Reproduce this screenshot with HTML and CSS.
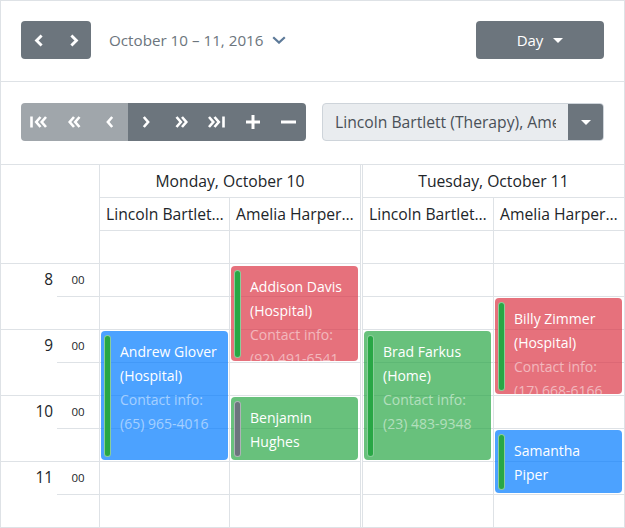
FILE: index.html
```html
<!DOCTYPE html>
<html lang="en">
<head>
<meta charset="utf-8">
<title>Scheduler</title>
<link rel="stylesheet" href="styles.css">
</head>
<body>
<div class="scheduler">
  <div class="toolbar">
    <div class="toolbar-left">
      <div class="btn-group">
        <button class="btn"><svg class="icon" width="10" height="13" viewBox="0 0 10 13"><path d="M7.6 1.5 L2.6 6.5 L7.6 11.5"/></svg></button>
        <button class="btn"><svg class="icon" width="10" height="13" viewBox="0 0 10 13"><path d="M2.4 1.5 L7.4 6.5 L2.4 11.5"/></svg></button>
      </div>
      <button class="date-btn">October 10 – 11, 2016<svg class="chev-down" width="14" height="8" viewBox="0 0 14 8"><path d="M1.2 1.2 L7 6.6 L12.8 1.2"/></svg></button>
    </div>
    <button class="btn view-btn">Day<span class="caret"></span></button>
  </div>

  <div class="toolbar toolbar-2">
    <div class="btn-group nav-group">
      <button class="btn disabled"><svg class="icon thin" width="17" height="12" viewBox="0 0 17 12"><path d="M1.5 0.5 V11.5 M10.5 1 L6.2 6 L10.5 11 M16 1 L11.7 6 L16 11"/></svg></button>
      <button class="btn disabled"><svg class="icon thin" width="13" height="12" viewBox="0 0 13 12"><path d="M6 1 L1.7 6 L6 11 M11.5 1 L7.2 6 L11.5 11"/></svg></button>
      <button class="btn disabled"><svg class="icon thin" width="8" height="12" viewBox="0 0 8 12"><path d="M6.2 1 L1.9 6 L6.2 11"/></svg></button>
      <button class="btn"><svg class="icon thin" width="8" height="12" viewBox="0 0 8 12"><path d="M1.8 1 L6.1 6 L1.8 11"/></svg></button>
      <button class="btn"><svg class="icon thin" width="13" height="12" viewBox="0 0 13 12"><path d="M1.5 1 L5.8 6 L1.5 11 M7 1 L11.3 6 L7 11"/></svg></button>
      <button class="btn"><svg class="icon thin" width="17" height="12" viewBox="0 0 17 12"><path d="M1 1 L5.3 6 L1 11 M6.5 1 L10.8 6 L6.5 11 M15.5 0.5 V11.5"/></svg></button>
      <button class="btn"><svg class="icon plus" width="14" height="14" viewBox="0 0 14 14"><path d="M7 0 V14 M0 7 H14"/></svg></button>
      <button class="btn"><svg class="icon plus" width="15" height="4" viewBox="0 0 15 4"><path d="M0 2 H15"/></svg></button>
    </div>
    <div class="res-select">
      <span class="res-text">Lincoln Bartlett (Therapy), Amelia Harper (Home)</span>
      <span class="res-toggle"><span class="caret"></span></span>
    </div>
  </div>

  <div class="grid">
    <div class="time-col">
      <div class="corner"></div>
      <div class="hour"><div class="hour-label">8</div><div class="mins"><div class="min">00</div><div class="min"></div></div></div>
      <div class="hour"><div class="hour-label">9</div><div class="mins"><div class="min">00</div><div class="min"></div></div></div>
      <div class="hour"><div class="hour-label">10</div><div class="mins"><div class="min">00</div><div class="min"></div></div></div>
      <div class="hour"><div class="hour-label">11</div><div class="mins"><div class="min">00</div><div class="min"></div></div></div>
    </div>

    <div class="day day-mon">
      <div class="day-head">Monday, October 10</div>
      <div class="res-cols">
        <div class="res-col">
          <div class="res-head">Lincoln Bartlett (Therapy)</div>
          <div class="allday"></div>
          <div class="slots">
            <div class="slot"></div><div class="slot"></div><div class="slot"></div><div class="slot"></div>
            <div class="slot"></div><div class="slot"></div><div class="slot"></div><div class="slot"></div>
            <div class="event event-blue" style="top:67px;height:129px">
              <span class="event-bar"></span>
              <div class="event-title">Andrew Glover (Hospital)</div>
              <div class="event-info">Contact info: (65) 965-4016</div>
            </div>
          </div>
        </div>
        <div class="res-col last">
          <div class="res-head">Amelia Harper (Home)</div>
          <div class="allday"></div>
          <div class="slots">
            <div class="slot"></div><div class="slot"></div><div class="slot"></div><div class="slot"></div>
            <div class="slot"></div><div class="slot"></div><div class="slot"></div><div class="slot"></div>
            <div class="event event-red" style="top:2px;height:95px">
              <span class="event-bar"></span>
              <div class="event-title">Addison Davis (Hospital)</div>
              <div class="event-info">Contact info: (92) 491-6541</div>
            </div>
            <div class="event event-green" style="top:133px;height:63px">
              <span class="event-bar gray"></span>
              <div class="event-title">Benjamin Hughes</div>
            </div>
          </div>
        </div>
      </div>
    </div>

    <div class="day day-tue">
      <div class="day-head">Tuesday, October 11</div>
      <div class="res-cols">
        <div class="res-col wide">
          <div class="res-head">Lincoln Bartlett (Therapy)</div>
          <div class="allday"></div>
          <div class="slots">
            <div class="slot"></div><div class="slot"></div><div class="slot"></div><div class="slot"></div>
            <div class="slot"></div><div class="slot"></div><div class="slot"></div><div class="slot"></div>
            <div class="event event-green" style="top:67px;height:129px">
              <span class="event-bar"></span>
              <div class="event-title">Brad Farkus (Home)</div>
              <div class="event-info">Contact info: (23) 483-9348</div>
            </div>
          </div>
        </div>
        <div class="res-col last">
          <div class="res-head">Amelia Harper (Home)</div>
          <div class="allday"></div>
          <div class="slots">
            <div class="slot"></div><div class="slot"></div><div class="slot"></div><div class="slot"></div>
            <div class="slot"></div><div class="slot"></div><div class="slot"></div><div class="slot"></div>
            <div class="event event-red" style="top:34px;height:96px">
              <span class="event-bar"></span>
              <div class="event-title">Billy Zimmer (Hospital)</div>
              <div class="event-info">Contact info: (17) 668-6166</div>
            </div>
            <div class="event event-blue" style="top:166px;height:63px">
              <span class="event-bar"></span>
              <div class="event-title">Samantha Piper</div>
            </div>
          </div>
        </div>
      </div>
    </div>
  </div>
</div>
</body>
</html>
```

FILE: styles.css
```css
* {
  box-sizing: border-box;
}

body {
  margin: 0;
  font-family: "Open Sans", "Noto Sans", sans-serif;
  color: #212529;
  background: #fff;
}

.scheduler {
  width: 625px;
  height: 528px;
  border: 1px solid #dee2e6;
  overflow: hidden;
  background: #fff;
}

/* ---------- toolbars ---------- */
.toolbar {
  display: flex;
  align-items: center;
  justify-content: space-between;
  height: 81px;
  padding: 20px 20px 22px;
  border-bottom: 1px solid #dee2e6;
}

.toolbar-2 {
  height: 83px;
  padding: 21px 20px 23px;
}

.toolbar-left {
  display: flex;
  align-items: center;
}

.btn {
  display: flex;
  align-items: center;
  justify-content: center;
  height: 38px;
  padding: 0;
  border: 0;
  background: #6c757d;
  color: #fff;
  font-family: inherit;
}

.btn.disabled {
  background: #a0a6ab;
}

.btn-group {
  display: flex;
  border-radius: 4px;
  overflow: hidden;
}

.btn-group .btn {
  width: 35px;
}

.nav-group {
  width: 285px;
}

.nav-group .btn {
  flex: 1;
  width: auto;
}

.icon {
  fill: none;
  stroke: #fff;
  stroke-width: 2.9;
  stroke-linecap: butt;
  stroke-linejoin: miter;
}

.icon.thin {
  stroke-width: 2.6;
}

.icon.plus {
  stroke-width: 3;
}

.date-btn {
  display: flex;
  align-items: center;
  gap: 9px;
  margin-left: 18px;
  padding: 0;
  border: 0;
  background: none;
  color: #6c757d;
  font-family: inherit;
  font-size: 15.2px;
}

.chev-down {
  fill: none;
  stroke: #5d7a99;
  stroke-width: 2.2;
}

.view-btn {
  width: 128px;
  gap: 10px;
  border-radius: 4px;
  font-size: 15px;
}

.caret {
  width: 0;
  height: 0;
  border-top: 5px solid #fff;
  border-left: 5px solid transparent;
  border-right: 5px solid transparent;
}

.res-select {
  display: flex;
  width: 282px;
  height: 38px;
  border: 1px solid #ced4da;
  border-radius: 4px;
  background: #e9ecef;
  overflow: hidden;
}

.res-text {
  flex: 1;
  margin-right: 12px;
  padding-left: 12px;
  overflow: hidden;
  white-space: nowrap;
  line-height: 36px;
  color: #495057;
  font-size: 15.7px;
}

.res-toggle {
  display: flex;
  align-items: center;
  justify-content: center;
  width: 36px;
  margin: -1px -1px -1px 0;
  background: #6c757d;
}

/* ---------- grid ---------- */
.grid {
  display: flex;
}

.time-col {
  width: 99px;
  border-right: 1px solid #dee2e6;
}

.corner {
  height: 99px;
  border-bottom: 1px solid #dee2e6;
}

.hour {
  display: flex;
  height: 66px;
  border-bottom: 1px solid #dee2e6;
}

.hour-label {
  width: 56px;
  height: 32px;
  padding-right: 4px;
  text-align: right;
  line-height: 32px;
  font-size: 15.4px;
}

.mins {
  flex: 1;
}

.min {
  height: 33px;
  text-align: center;
  line-height: 32px;
  font-size: 11.5px;
}

.min:first-child {
  border-bottom: 1px solid #dee2e6;
}

.day {
  display: flex;
  flex-direction: column;
}

.day-mon {
  width: 263px;
  border-right: 3px double #dee2e6;
}

.day-tue {
  width: 261px;
}

.day-head {
  height: 33px;
  border-bottom: 1px solid #dee2e6;
  text-align: center;
  line-height: 32px;
  font-size: 15.7px;
}

.res-cols {
  display: flex;
}

.res-col {
  width: 130px;
  border-right: 1px solid #dee2e6;
}

.res-col.wide {
  width: 131px;
}

.res-col.last {
  border-right: 0;
}

.res-head {
  height: 33px;
  padding: 0 5px 0 6px;
  border-bottom: 1px solid #dee2e6;
  overflow: hidden;
  white-space: nowrap;
  text-overflow: ellipsis;
  line-height: 32px;
  font-size: 15.7px;
}

.allday,
.slot {
  height: 33px;
  border-bottom: 1px solid #dee2e6;
}

.slots {
  position: relative;
}

/* ---------- events ---------- */
.event {
  position: absolute;
  left: 1px;
  width: 127px;
  padding: 9px 8px 0 19px;
  border-radius: 4px;
  overflow: hidden;
  color: #fff;
  font-size: 14px;
  line-height: 24px;
}

.event-red {
  background: rgba(220, 53, 69, 0.7);
}

.event-blue {
  background: rgba(0, 123, 255, 0.7);
}

.event-green {
  background: rgba(40, 167, 69, 0.7);
}

.event-bar {
  position: absolute;
  left: 3px;
  top: 4px;
  bottom: 3px;
  width: 7px;
  border: 1px solid rgba(255, 255, 255, 0.45);
  border-radius: 4px;
  background: #28a745;
}

.event-bar.gray {
  background: #6c757d;
}

.event-info {
  color: rgba(255, 255, 255, 0.5);
}
```
